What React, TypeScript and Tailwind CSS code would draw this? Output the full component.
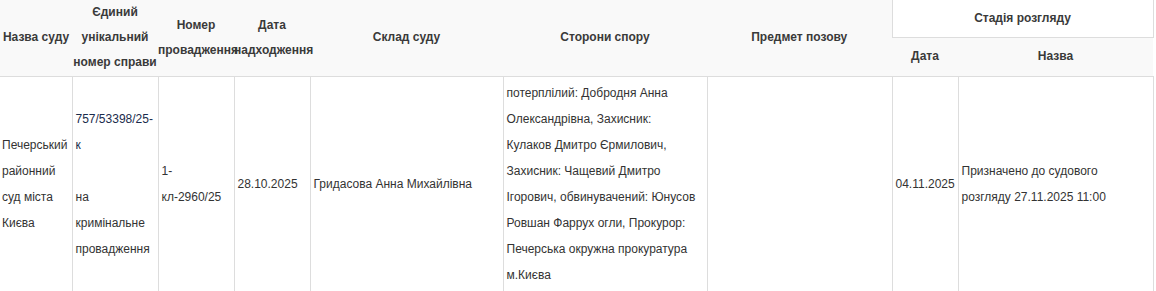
const cols = [72, 86, 76, 76, 193, 204, 185, 66, 195]

export default function App() {
  const th = 'p-0 text-center align-middle font-bold text-[12px] leading-[25px] text-[#3a3a3a] whitespace-nowrap'
  const td = 'border border-[#dddddd] px-[3px] py-[3px] align-middle text-[12px] leading-[26px] text-[#333]'

  return (
    <div className="w-[1156px] h-[291px] overflow-hidden bg-white font-['Liberation_Sans',Arial,sans-serif]">
      <table className="table-fixed border-collapse w-[1153px]">
        <colgroup>
          {cols.map((w, i) => (
            <col key={i} style={{ width: w }} />
          ))}
        </colgroup>
        <thead className="bg-[#f9f9f9]">
          <tr className="h-[37px]">
            <th rowSpan={2} className={th}>Назва суду</th>
            <th rowSpan={2} className={th}>
              Єдиний
              <br />
              унікальний
              <br />
              номер справи
            </th>
            <th rowSpan={2} className={th}>
              Номер
              <br />
              провадження
            </th>
            <th rowSpan={2} className={th}>
              Дата
              <br />
              надходження
            </th>
            <th rowSpan={2} className={th}>Склад суду</th>
            <th rowSpan={2} className={th}>Сторони спору</th>
            <th rowSpan={2} className={th}>Предмет позову</th>
            <th
              colSpan={2}
              className="border border-t-0 border-[#dddddd] bg-white p-0 text-center align-middle font-bold text-[12px] leading-[25px] text-[#3a3a3a]"
            >
              Стадія розгляду
            </th>
          </tr>
          <tr className="h-[39px] border-b border-[#dddddd]">
            <th className={th}>Дата</th>
            <th className={th}>Назва</th>
          </tr>
        </thead>
        <tbody>
          <tr>
            <td className={`${td} border-l-0 pl-[2px]`}>
              Печерський районний суд міста Києва
            </td>
            <td className={td}>
              <span className="text-[#1a2b4c]">757/53398/25-к</span>
              <br />
              <br />
              на кримінальне провадження
            </td>
            <td className={td}>1-кл-2960/25</td>
            <td className={td}>28.10.2025</td>
            <td className={td}>Гридасова Анна Михайлівна</td>
            <td className={`${td} pr-[8px]`}>
              потерплілий: Добродня Анна Олександрівна, Захисник: Кулаков Дмитро Єрмилович, Захисник: Чащевий Дмитро
              Ігорович, обвинувачений: Юнусов Ровшан Фаррух огли, Прокурор: Печерська окружна прокуратура м.Києва
            </td>
            <td className={td}></td>
            <td className={td}>04.11.2025</td>
            <td className={td}>Призначено до судового розгляду 27.11.2025 11:00</td>
          </tr>
        </tbody>
      </table>
    </div>
  )
}
